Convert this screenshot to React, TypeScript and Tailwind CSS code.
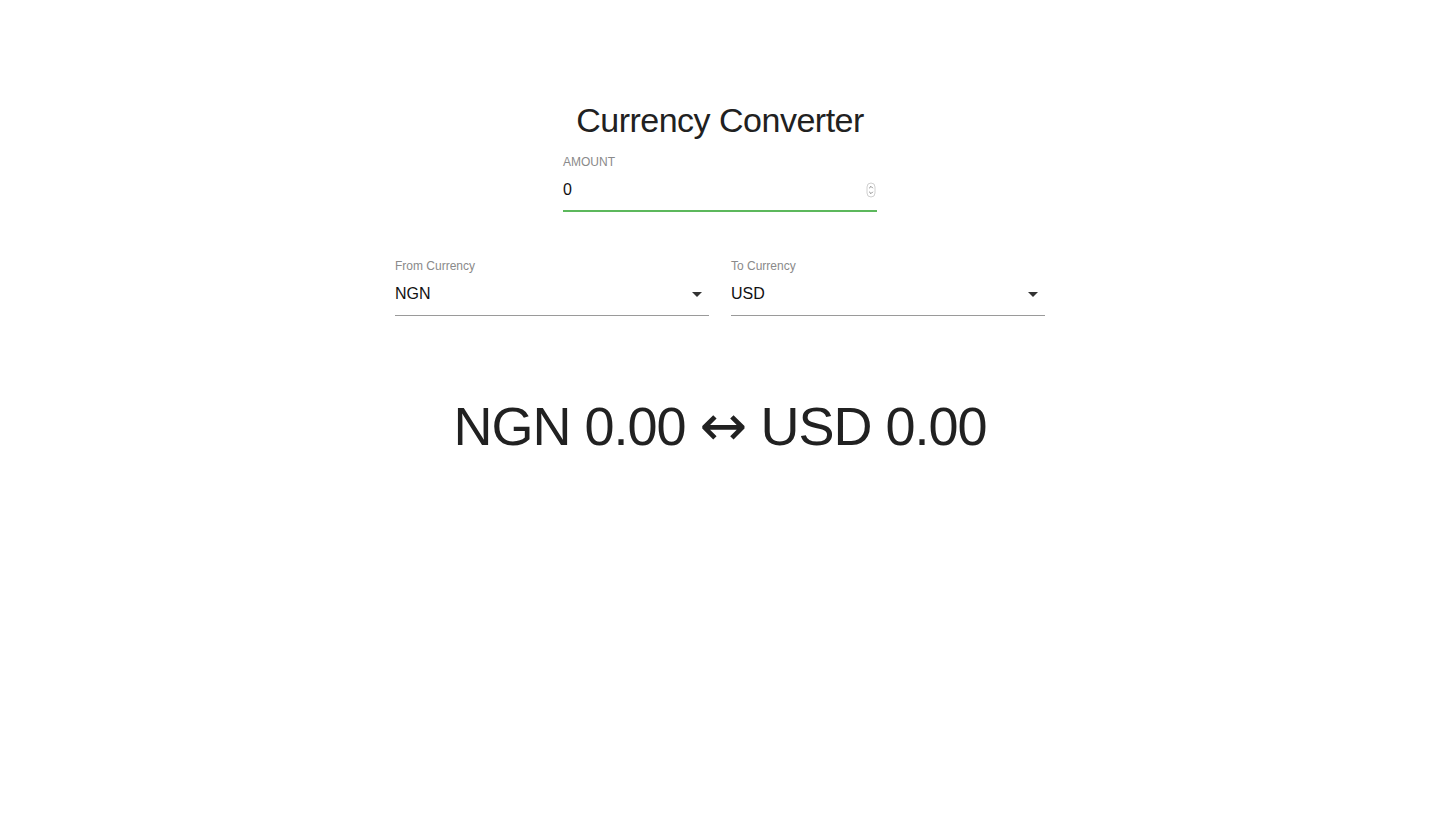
import React from "react";

function Stepper() {
  return (
    <svg width="10" height="16" viewBox="0 0 10 16" className="shrink-0">
      <rect x="1" y="1" width="8" height="14" rx="4" fill="#fff" stroke="#c4c4c4" strokeWidth="0.8" />
      <path d="M3.2 6.2 L5 4.4 L6.8 6.2" fill="none" stroke="#777" strokeWidth="0.9" />
      <path d="M3.2 9.8 L5 11.6 L6.8 9.8" fill="none" stroke="#777" strokeWidth="0.9" />
    </svg>
  );
}

function ArrowDrop() {
  return (
    <svg width="24" height="24" viewBox="0 0 24 24" className="shrink-0">
      <path d="M7 10l5 5 5-5z" fill="#333" />
    </svg>
  );
}

function SelectField({ label, value }: { label: string; value: string }) {
  return (
    <div className="flex w-[314px] flex-col">
      <div className="h-4 text-[12px] leading-4 text-[#8a8a8a]">{label}</div>
      <div className="mt-[8px] flex h-[34px] items-start border-b border-[#9a9a9a]">
        <div className="h-6 flex-1 text-[16px] leading-6 text-[#111]">{value}</div>
        <ArrowDrop />
      </div>
    </div>
  );
}

export default function App() {
  return (
    <div
      className="min-h-screen w-full bg-white"
      style={{ fontFamily: '"Liberation Sans", Arial, Helvetica, sans-serif' }}
    >
      <div className="flex flex-col items-center pt-[100px]">
        <h1 className="h-10 text-[34px] leading-10 font-normal tracking-[-0.5px] text-[#212121]">
          Currency Converter
        </h1>
        <div className="mt-[14px] flex w-[314px] flex-col">
          <label className="h-4 text-[12px] leading-4 text-[#8a8a8a]">AMOUNT</label>
          <div className="mt-[8px] flex h-[34px] items-start border-b-2 border-[#5cb85c]">
            <input
              type="text"
              defaultValue="0"
              className="h-6 flex-1 bg-transparent text-[16px] leading-6 text-[#111] outline-none"
            />
            <div className="mt-[4px] mr-[1px]">
              <Stepper />
            </div>
          </div>
        </div>
        <div className="mt-[46px] flex gap-[22px]">
          <SelectField label="From Currency" value="NGN" />
          <SelectField label="To Currency" value="USD" />
        </div>
        <div className="mt-[77px] h-[65px] text-[54px] leading-[65px] tracking-[-1px] text-[#212121]">
          NGN 0.00{" "}
          <span className="text-[57px]" style={{ fontFamily: '"DejaVu Sans", sans-serif' }}>↔</span>{" "}
          USD 0.00
        </div>
      </div>
    </div>
  );
}
